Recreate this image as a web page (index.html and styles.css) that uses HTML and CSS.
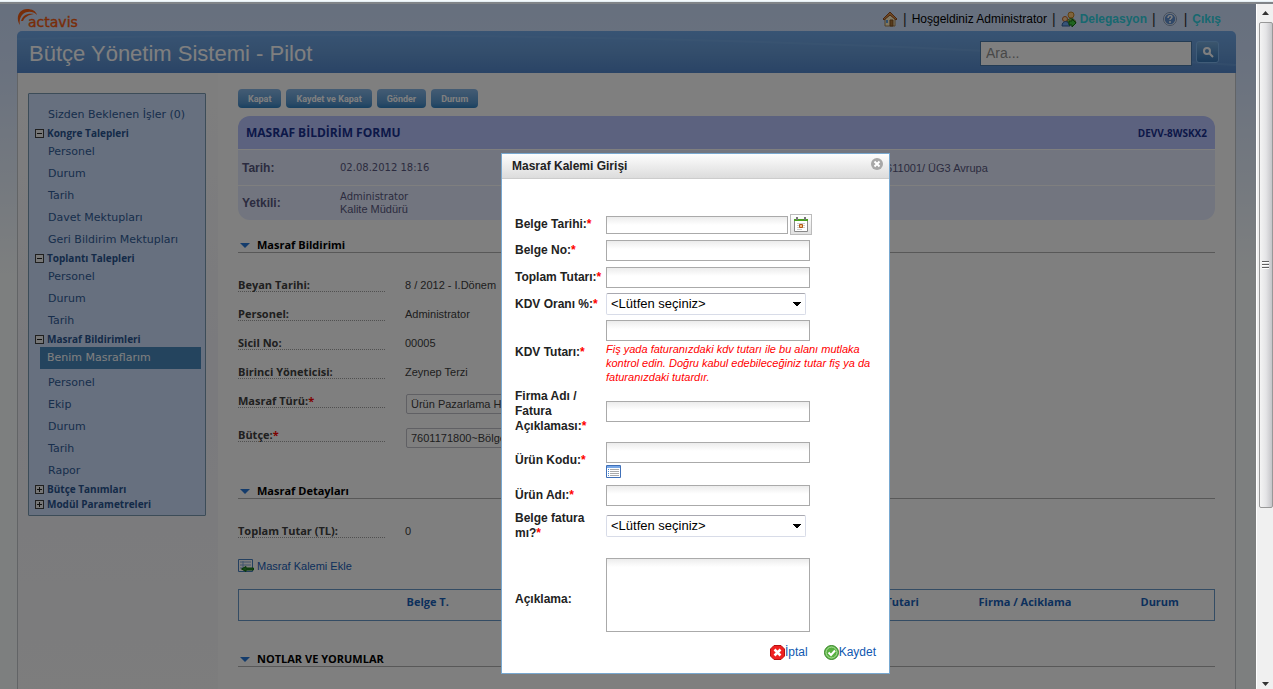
FILE: index.html
```html
<!DOCTYPE html>
<html lang="tr">
<head>
<meta charset="utf-8">
<title>Bütçe Yönetim Sistemi - Pilot</title>
<link rel="stylesheet" href="styles.css">
</head>
<body>
<div class="window-edge"></div>
<div class="viewport">
  <div class="page">
    <header class="topbar">
      <svg class="logo" width="64" height="22" viewBox="0 0 64 22" role="img" aria-label="actavis">
        <path d="M3 17C-2 10 2 1 10 1c5 0 9 2 10 6C16 3 10 3 6 6c-3 3-4 7-3 11z" fill="#f05a10"/>
        <path d="M4 13c2-6 6-8 13-7-6 1-9 3-11 7z" fill="#f05a10"/>
        <text x="11" y="19" class="logo-text">actavis</text>
      </svg>
      <nav class="user-links">
        <svg width="16" height="16" viewBox="0 0 16 16"><path d="M3 8v7h10V8L8 3z" fill="#fff0c8" stroke="#a08050"/><path d="M8 1L1 8l1 1 6-5 6 5 1-1z" fill="#e09048" stroke="#905020"/><path d="M4 9h2v3H4z" fill="#60a0e0"/><path d="M8 9h3v6H8z" fill="#b07838" stroke="#805020"/></svg>
        <span class="bar">|</span>
        <span>Hoşgeldiniz Administrator</span>
        <span class="bar">|</span>
        <a href="#" class="top-link"><svg width="16" height="16" viewBox="0 0 16 16"><circle cx="10" cy="4" r="3" fill="#ffc878" stroke="#c08020"/><path d="M6 12c0-6 8-6 9 0z" fill="#a0d060" stroke="#508020"/><circle cx="4" cy="8" r="2.500" fill="#ffd098" stroke="#c06020"/><path d="M1 15c0-6 7-6 8 0z" fill="#70a8f0" stroke="#3060a0"/><path d="M8 10h3V8l4 4-4 4v-2H8z" fill="#40c840" stroke="#107010"/></svg>Delegasyon</a>
        <span class="bar">|</span>
        <svg class="help" width="14" height="14" viewBox="0 0 14 14"><circle cx="7" cy="7" r="6" fill="#6090d0" stroke="#e8f0fc" stroke-width="1.500"/><circle cx="7" cy="7" r="6.500" fill="none" stroke="#8098b8"/><path d="M5 6c0-3 4-3 4-1 0 1.500-2 1.500-2 3M7 9v2" fill="none" stroke="#fff" stroke-width="1.500"/></svg>
        <span class="bar">|</span>
        <a href="#" class="top-link">Çıkış</a>
      </nav>
    </header>

    <div class="banner">
      <svg class="swoosh" viewBox="0 0 400 42" preserveAspectRatio="none"><path d="M0 8Q200-6 400 34" fill="none" stroke="#86b8ec" stroke-width="2"/></svg>
      <h1>Bütçe Yönetim Sistemi - Pilot</h1>
      <form class="search">
        <input type="text" placeholder="Ara..." aria-label="Ara">
        <button type="button" aria-label="Ara"><svg width="12" height="12" viewBox="0 0 12 12"><circle cx="5" cy="5" r="3" fill="none" stroke="#fff" stroke-width="2"/><path d="M7 7l4 4" stroke="#fff" stroke-width="2"/></svg></button>
      </form>
    </div>

    <div class="content">
      <aside class="side">
        <nav class="menu">
          <a href="#" class="leaf">Sizden Beklenen İşler (0)</a>
          <a href="#" class="group"><i class="box minus"></i>Kongre Talepleri</a>
          <a href="#" class="leaf">Personel</a>
          <a href="#" class="leaf">Durum</a>
          <a href="#" class="leaf">Tarih</a>
          <a href="#" class="leaf">Davet Mektupları</a>
          <a href="#" class="leaf">Geri Bildirim Mektupları</a>
          <a href="#" class="group"><i class="box minus"></i>Toplantı Talepleri</a>
          <a href="#" class="leaf">Personel</a>
          <a href="#" class="leaf">Durum</a>
          <a href="#" class="leaf">Tarih</a>
          <a href="#" class="group"><i class="box minus"></i>Masraf Bildirimleri</a>
          <a href="#" class="leaf current">Benim Masraflarım</a>
          <a href="#" class="leaf">Personel</a>
          <a href="#" class="leaf">Ekip</a>
          <a href="#" class="leaf">Durum</a>
          <a href="#" class="leaf">Tarih</a>
          <a href="#" class="leaf">Rapor</a>
          <a href="#" class="group"><i class="box plus"></i>Bütçe Tanımları</a>
          <a href="#" class="group"><i class="box plus"></i>Modül Parametreleri</a>
        </nav>
      </aside>

      <main class="main">
        <div class="actions">
          <button type="button">Kapat</button>
          <button type="button">Kaydet ve Kapat</button>
          <button type="button">Gönder</button>
          <button type="button">Durum</button>
        </div>

        <section class="summary">
          <div class="summary-head"><h2>MASRAF BİLDİRİM FORMU</h2><span class="code">DEVV-8WSKX2</span></div>
          <div class="summary-row"><b>Tarih:</b><span class="wide">02.08.2012 18:16</span><span>7611001/ ÜG3 Avrupa</span></div>
          <div class="summary-row"><b>Yetkili:</b><span><span class="wide">Administrator</span><br>Kalite Müdürü</span></div>
        </section>

        <section class="block">
          <h3><i class="caret"></i>Masraf Bildirimi</h3>
          <div class="row"><span class="name">Beyan Tarihi:</span><span class="value">8 / 2012 - I.Dönem</span></div>
          <div class="row"><span class="name">Personel:</span><span class="value">Administrator</span></div>
          <div class="row"><span class="name">Sicil No:</span><span class="value">00005</span></div>
          <div class="row"><span class="name">Birinci Yöneticisi:</span><span class="value">Zeynep Terzi</span></div>
          <div class="row tall"><label class="name" for="tur">Masraf Türü:<em>*</em></label><select id="tur"><option>Ürün Pazarlama Harcamaları</option></select></div>
          <div class="row tall"><label class="name" for="butce">Bütçe:<em>*</em></label><select id="butce"><option>7601171800~Bölge</option></select></div>
        </section>

        <section class="block details">
          <h3><i class="caret"></i>Masraf Detayları</h3>
          <div class="row"><span class="name">Toplam Tutar (TL):</span><span class="value">0</span></div>
          <a href="#" class="add"><svg width="16" height="16" viewBox="0 0 16 16"><path d="M.5 1.500h14v12H.5z" fill="#fff" stroke="#4880c0"/><path d="M2 4h11M2 7h11M2 10h5M5 3v9" stroke="#80a8d8"/><path d="M15.500 10H8V8.500L3.500 11 8 13.500V12h7.500z" fill="#309030" stroke="#107010"/></svg>Masraf Kalemi Ekle</a>
          <table class="items">
            <thead><tr><th class="c-lead"></th><th>Belge T.</th><th class="c-sum">Tutari</th><th class="c-firm">Firma / Aciklama</th><th class="c-state">Durum</th></tr></thead>
          </table>
        </section>

        <section class="block notes">
          <h3><i class="caret"></i>NOTLAR VE YORUMLAR</h3>
        </section>
      </main>
    </div>

    <div class="shade"></div>

    <dialog open class="dialog" aria-labelledby="dlg-title">
      <div class="dialog-head">
        <h2 id="dlg-title">Masraf Kalemi Girişi</h2>
        <button type="button" class="close" aria-label="Kapat"><svg width="12" height="12" viewBox="0 0 12 12"><circle cx="6" cy="6" r="6" fill="#a8a8a8"/><path d="M3.500 3.500l5 5M8.500 3.500l-5 5" stroke="#fff" stroke-width="2"/></svg></button>
      </div>
      <form class="dialog-body">
        <div class="field"><label for="tarih">Belge Tarihi:<em>*</em></label>
          <div class="date"><input type="text" id="tarih"><button type="button" class="cal" aria-label="Takvim"><svg width="14" height="16" viewBox="0 0 14 16"><path d="M.5 3.500h13v11H.5z" fill="#fff" stroke="#888"/><path d="M0 2h14v2H0z" fill="#48a020"/><path d="M3 0v3M11 0v3" stroke="#777" stroke-width="2"/><path d="M3 6.500h8M3 8.500h8M3 10.500h8M3 12.500h5" stroke="#ccc"/><path d="M5.500 7.500h3v3h-3z" fill="#f8c080" stroke="#b05818"/></svg></button></div></div>
        <div class="field"><label for="no">Belge No:<em>*</em></label><div><input type="text" id="no"></div></div>
        <div class="field total"><label for="toplam">Toplam Tutarı:<em>*</em></label><div><input type="text" id="toplam"></div></div>
        <div class="field"><label for="oran">KDV Oranı %:<em>*</em></label><div><select id="oran"><option>&lt;Lütfen seçiniz&gt;</option></select></div></div>
        <div class="field"><label for="kdv">KDV Tutarı:<em>*</em></label><div><input type="text" id="kdv"><p class="hint">Fiş yada faturanızdaki kdv tutarı ile bu alanı mutlaka kontrol edin. Doğru kabul edebileceğiniz tutar fiş ya da faturanızdaki tutardır.</p></div></div>
        <div class="field firm"><label for="firma">Firma Adı / Fatura Açıklaması:<em>*</em></label><div><input type="text" id="firma"></div></div>
        <div class="field product"><label for="kod">Ürün Kodu:<em>*</em></label><div><input type="text" id="kod"><button type="button" class="pick" aria-label="Ürün seç"><svg width="15" height="13" viewBox="0 0 15 13"><path d="M.5.5h14v12H.5z" fill="#fff" stroke="#4070b8"/><path d="M1 1h13v2H1z" fill="#78a8e8"/><path d="M2 4.500h1M2 6.500h1M2 8.500h1M2 10.500h1" stroke="#4888d0"/><path d="M4 4.500h9M4 6.500h9M4 8.500h9M4 10.500h9" stroke="#aaa"/></svg></button></div></div>
        <div class="field name-field"><label for="ad">Ürün Adı:<em>*</em></label><div><input type="text" id="ad"></div></div>
        <div class="field invoice"><label for="fatura">Belge fatura mı?<em>*</em></label><div><select id="fatura"><option>&lt;Lütfen seçiniz&gt;</option></select></div></div>
        <div class="field note"><label for="aciklama">Açıklama:</label><div><textarea id="aciklama"></textarea></div></div>
        <div class="buttons">
          <button type="button"><svg width="15" height="15" viewBox="0 0 15 15"><path d="M4 .5h7L14.500 4v7L11 14.500H4L.5 11V4z" fill="#f02020" stroke="#b81010"/><path d="M4.500 4.500l6 6M10.500 4.500l-6 6" stroke="#fff" stroke-width="2.500"/></svg>İptal</button>
          <button type="button"><svg width="15" height="15" viewBox="0 0 15 15"><circle cx="7.500" cy="7.500" r="7" fill="#58b040" stroke="#388828"/><circle cx="7.500" cy="7.500" r="5.500" fill="none" stroke="#b0e0a0"/><path d="M4.500 7.500l2.500 2.500 4-4.500" fill="none" stroke="#fff" stroke-width="2"/></svg>Kaydet</button>
        </div>
      </form>
    </dialog>
  </div>

  <div class="scrollbar" aria-hidden="true">
    <svg class="arrow" width="7" height="4" viewBox="0 0 7 4"><path d="M0 4l3.500-4L7 4z" fill="#333"/></svg>
    <div class="thumb"><i></i><i></i><i></i></div>
    <svg class="arrow" width="7" height="4" viewBox="0 0 7 4"><path d="M0 0l3.500 4L7 0z" fill="#333"/></svg>
  </div>
</div>
</body>
</html>
```
FILE: styles.css
```css
* { box-sizing: border-box; }

body {
  margin: 0;
  height: 100vh;
  display: flex;
  flex-direction: column;
  overflow: hidden;
  font: 11px/14px "Liberation Sans", Arial, sans-serif;
  color: #404040;
}

h1, h2, h3, p { margin: 0; font-size: inherit; }
a { text-decoration: none; }
i, em { font-style: normal; }
button, input, select, textarea { font: inherit; margin: 0; }

.window-edge {
  height: 4px;
  flex: none;
  background: #e4eef4;
  border-top: 1px solid #f4fafc;
  border-bottom: 2px solid #808488;
}

.viewport { flex: 1; min-height: 0; display: flex; }

.page {
  flex: 1;
  min-width: 0;
  position: relative;
  overflow: hidden;
  display: flex;
  flex-direction: column;
  padding: 0 20px 0 17px;
  background: linear-gradient(#cee0fc, #d4e4ff 60px, #fafefe 270px);
}

/* Top bar */
.topbar {
  height: 27px;
  flex: none;
  display: flex;
  justify-content: space-between;
  align-items: center;
  padding: 3px 15px 0 0;
}
.logo-text { font: 14px/14px "DejaVu Sans", sans-serif; fill: #f05a10; stroke: #f05a10; stroke-width: .4px; }
.user-links { display: flex; align-items: center; gap: 5px; font-size: 12px; color: #000; }
.bar { font-size: 14px; color: #303030; }
.top-link { display: flex; align-items: center; gap: 3px; font-weight: bold; color: #30d0e0; }
.help { margin: 0 2px; }

.banner {
  position: relative;
  height: 42px;
  flex: none;
  display: flex;
  align-items: center;
  justify-content: space-between;
  padding: 0 17px 0 12px;
  border-radius: 5px 5px 0 0;
  background: linear-gradient(#70a8e8, #689cd8 20px, #5488cc);
}
.swoosh { position: absolute; inset: 0; width: 100%; height: 100%; opacity: .25; }
.banner h1 { position: relative; padding-top: 3px; font-size: 22px; line-height: 28px; font-weight: normal; color: #fff; }
.search { position: relative; display: flex; align-items: center; gap: 4px; padding-top: 2px; }
.search input {
  width: 212px;
  height: 25px;
  padding: 0 5px;
  border: 1px solid #4878a8;
  background: #fff;
  font-size: 14px;
}
.search input::placeholder { color: #909090; opacity: 1; }
.search button {
  width: 23px;
  height: 22px;
  margin-bottom: 2px;
  padding: 0;
  display: grid;
  place-items: center;
  border: 1px solid #80b8f0;
  border-radius: 3px;
  background: linear-gradient(#78acdc, #3878b8);
}

/* Columns */
.content {
  flex: 1;
  display: flex;
  border: 1px solid #c4c8cc;
  border-width: 0 1px;
  background: #fff;
}
.side { width: 200px; flex: none; padding: 20px 12px 0 10px; background: linear-gradient(#fdfdfd, #f4f4fa 300px, #fafafa); }

.menu {
  display: flex;
  flex-direction: column;
  padding: 10px 4px 3px 11px;
  border: 1px solid #7898b0;
  background: #cee0fe;
  border-radius: 1px;
}
.leaf {
  padding-left: 8px;
  line-height: 22px;
  font-family: "DejaVu Sans", Verdana, sans-serif;
  color: #305c98;
}
.current { margin-bottom: 3px; padding-left: 7px; background: #4888bc; color: #fff; }
.group {
  display: flex;
  align-items: center;
  gap: 3px;
  margin-left: -5px;
  line-height: 15px;
  font-family: "Open Sans", Tahoma, sans-serif;
  font-size: 10px;
  font-weight: bold;
  color: #285490;
}
.box {
  width: 9px;
  height: 9px;
  border: 1px solid #404040;
  background: linear-gradient(#222, #222) center / 5px 1px no-repeat #eee;
}
.plus {
  background:
    linear-gradient(#222, #222) center / 5px 1px no-repeat,
    linear-gradient(#222, #222) center / 1px 5px no-repeat #eee;
}

.main { flex: 1; min-width: 0; padding: 16px 20px 0; }

.actions { display: flex; gap: 5px; }
.actions button {
  height: 19px;
  padding: 0 10px;
  border: 0;
  border-radius: 4px;
  background: linear-gradient(#88b8e8, #5898d0 14px, #3080c0);
  font: bold 9px/14px Roboto, Tahoma, sans-serif;
  color: #fff;
}

.summary { margin-top: 8px; border-radius: 12px; overflow: hidden; color: #585880; }
.summary-head {
  height: 33px;
  display: flex;
  align-items: center;
  justify-content: space-between;
  padding: 0 8px;
  background: #b8c4fe;
  color: #183090;
  font-family: "Open Sans", Tahoma, sans-serif;
  font-size: 12px;
  font-weight: bold;
}
.summary-head .code { font-size: 10px; }
.summary-row {
  min-height: 36px;
  display: grid;
  grid-template-columns: 98px 540px 1fr;
  align-items: center;
  padding: 0 4px;
  border-top: 1px solid #fff;
  background: #e4eafe;
}
.summary-row:last-child { min-height: 35px; line-height: 13px; }
.summary-row b { font-size: 12px; }
.wide { font-family: "DejaVu Sans", Verdana, sans-serif; font-size: 10px; }

.block { margin-top: 18px; }
.block h3 {
  display: flex;
  align-items: center;
  gap: 7px;
  padding-left: 2px;
  margin-bottom: 24px;
  border-bottom: 1px solid #b0b0b0;
  font-family: "Open Sans", Tahoma, sans-serif;
  font-size: 11px;
  line-height: 14px;
  color: #000;
}
.caret { border: 5px solid transparent; border-top-color: #2878d8; border-bottom: 0; width: 9px; }
.row { min-height: 29px; display: grid; grid-template-columns: 147px 1fr; column-gap: 20px; align-items: start; }
.name, .value { padding-top: 2px; line-height: 12px; }
.value { justify-self: start; }
.name {
  border-bottom: 1px dotted #a0a0a0;
  font-family: "Open Sans", Tahoma, sans-serif;
  font-weight: bold;
}
.tall { min-height: 34px; }
.row select {
  width: 260px;
  height: 20px;
  margin: 1px;
  padding: 0;
  border: 1px solid #c0c0c8;
  border-radius: 2px;
  background: #fff;
  color: #404040;
}
em { color: #f00; }
.details { margin-top: 23px; }
.notes { margin-top: 31px; }
.add { display: flex; align-items: center; gap: 3px; margin-top: 6px; line-height: 16px; color: #1860b8; }

.items {
  width: 100%;
  height: 31px;
  margin-top: 15px;
  border: 1px solid #6898c8;
  border-collapse: collapse;
  table-layout: fixed;
  font-family: "Open Sans", Tahoma, sans-serif;
  color: #1860b8;
}
.items th { padding: 5px 0 11px; text-align: left; }
.c-lead { width: 168px; }
.c-sum { width: 93px; }
.c-firm { width: 162px; }
.c-state { width: 74px; }

/* Modal layer */
.shade { position: absolute; inset: 0; background: rgba(0, 0, 0, .5); }

.dialog {
  position: absolute;
  inset: 149px auto auto 501px;
  width: 389px;
  margin: 0;
  padding: 0;
  border: 1px solid #78a8d0;
  background: #fff;
  color: #222;
}
.dialog-head {
  height: 25px;
  display: flex;
  align-items: center;
  justify-content: space-between;
  padding: 0 6px 0 10px;
  border-bottom: 1px solid #ccc;
  background: linear-gradient(#fdfdfd, #dcdcdc);
  font-size: 12px;
}
.close { padding: 0 0 4px; border: 0; background: none; display: flex; }

.dialog-body { display: flex; flex-direction: column; gap: 5px; padding: 35px 11px 13px 13px; }
.field { display: grid; grid-template-columns: 91px 1fr; align-items: center; }
.field label { font-size: 12px; line-height: 15px; font-weight: bold; }
.field.firm label, .field.invoice label { padding-right: 12px; }
.field input, .field textarea {
  display: block;
  width: 204px;
  height: 21px;
  padding: 0 3px;
  border: 1px solid #aaa;
  background: linear-gradient(#ececec, #fff 8px);
}
.field textarea { height: 74px; resize: none; }
.date { display: flex; align-items: center; gap: 2px; }
.date input { width: 182px; height: 18px; }
.cal {
  width: 22px;
  height: 21px;
  padding: 0;
  display: grid;
  place-items: center;
  border: 1px solid #bbb;
  background: linear-gradient(#fff, #e0e0e0);
}
.field select {
  display: block;
  width: 200px;
  height: 22px;
  padding: 0 4px;
  appearance: none;
  border: 1px solid #d8dce8;
  border-top-color: #a8a8b0;
  border-radius: 2px;
  background:
    conic-gradient(from 315deg at 50% 100%, #000 90deg, transparent 0) right 4px center / 8px 4px no-repeat,
    #fff;
  font-size: 13px;
  color: #000;
}
.hint { padding-top: 1px; color: #f00; font-style: italic; }
.total { margin-top: 1px; }
.product { margin-top: 3px; }
.pick { display: block; margin-top: 2px; padding: 0; border: 0; background: none; line-height: 0; }
.name-field { margin-top: 2px; }
.note { margin-top: 12px; }
.note label { padding-top: 8px; }
.buttons { display: flex; justify-content: flex-end; gap: 16px; margin-top: 7px; padding-right: 2px; }
.buttons button {
  display: flex;
  align-items: center;
  padding: 0;
  border: 0;
  background: none;
  font-size: 12px;
  line-height: 16px;
  color: #1058b0;
}

/* Scrollbar */
.scrollbar {
  width: 17px;
  flex: none;
  display: flex;
  flex-direction: column;
  align-items: center;
  padding: 7px 1px 3px 2px;
  border-left: 1px solid #fff;
  background: #f0f0f0;
}
.thumb {
  width: 14px;
  height: 72%;
  margin: 7px 0 auto;
  display: flex;
  flex-direction: column;
  align-items: center;
  justify-content: center;
  gap: 1px;
  border: 1px solid #989898;
  border-radius: 2px;
  background: linear-gradient(to right, #f4f4f4, #e4e4e6 50%, #c4c4c8);
}
.thumb i { width: 7px; height: 2px; background: #606060; border-bottom: 1px solid #fff; }
```
